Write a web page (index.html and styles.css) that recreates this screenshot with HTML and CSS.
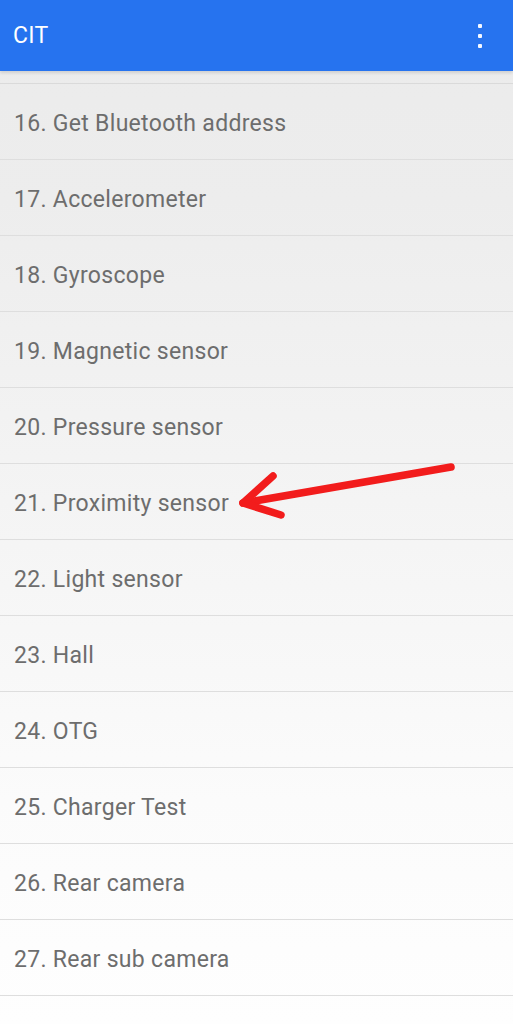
FILE: index.html
```html
<!DOCTYPE html>
<html>
<head>
<meta charset="utf-8">
<link rel="stylesheet" href="styles.css">
</head>
<body>
<header class="appbar">
  <span class="title">CIT</span>
  <span class="menu"><i></i><i></i><i></i></span>
</header>
<main class="content">
  <ul class="list">
    <li>16. Get Bluetooth address</li>
    <li>17. Accelerometer</li>
    <li>18. Gyroscope</li>
    <li>19. Magnetic sensor</li>
    <li>20. Pressure sensor</li>
    <li>21. Proximity sensor</li>
    <li>22. Light sensor</li>
    <li>23. Hall</li>
    <li>24. OTG</li>
    <li>25. Charger Test</li>
    <li>26. Rear camera</li>
    <li>27. Rear sub camera</li>
  </ul>
  <svg class="arrow" width="513" height="1024" viewBox="0 0 513 1024">
    <g stroke="#f21c1c" stroke-width="7.5" stroke-linecap="round" stroke-linejoin="round" fill="none">
      <line x1="451" y1="467" x2="243" y2="503"/>
      <polyline points="273,476 243,503 281,515"/>
    </g>
  </svg>
</main>
</body>
</html>
```
FILE: styles.css
```css
html, body {
  margin: 0;
  padding: 0;
}
body {
  width: 513px;
  height: 1024px;
  overflow: hidden;
  font-family: Roboto, "Liberation Sans", sans-serif;
  background: linear-gradient(to bottom, #ebebeb 0px, #ededed 200px, #f4f4f4 500px, #fbfbfb 800px, #fefefe 1024px);
}
.appbar {
  height: 71px;
  background: #2673ef;
  display: flex;
  align-items: center;
  justify-content: space-between;
  padding: 0 31px 0 13px;
  box-sizing: border-box;
  box-shadow: 0 2px 3px rgba(0,0,0,0.12);
  position: relative;
  z-index: 1;
}
.title {
  color: #ffffff;
  font-size: 23px;
  letter-spacing: 0.3px;
}
.menu {
  display: flex;
  flex-direction: column;
  gap: 6px;
}
.menu i {
  width: 4px;
  height: 4px;
  background: #f4f7ff;
  border-radius: 1px;
}
.content {
  position: relative;
  padding-top: 12px;
}
.list {
  list-style: none;
  margin: 0;
  padding: 0;
  border-top: 1px solid #dadada;
}
.list li {
  border-bottom: 1px solid #dedede;
  display: flex;
  align-items: center;
  padding: 3px 0 0 14px;
  box-sizing: border-box;
  height: 76px;
  font-size: 23px;
  color: #6d6d6d;
  letter-spacing: 0.3px;
}
.arrow {
  position: absolute;
  left: 0;
  top: -71px;
  pointer-events: none;
}
```
